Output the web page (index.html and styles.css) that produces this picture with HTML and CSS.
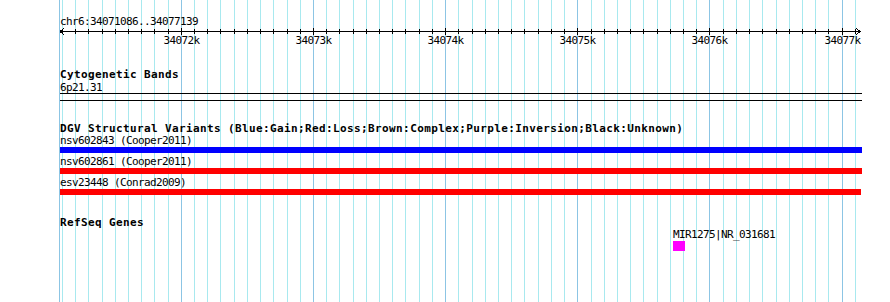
FILE: index.html
```html
<!DOCTYPE html>
<html lang="en">
<head>
    <meta charset="UTF-8">
    <title>chr6:34071086..34077139</title>
    <link rel="stylesheet" href="styles.css">
</head>
<body>
    <div class="browser">
        <svg class="grid" width="890" height="302" viewBox="0 0 890 302">
            <path class="minor" d="M62.5 0V302M75.5 0V302M88.5 0V302M102.5 0V302M115.5 0V302M128.5 0V302M141.5 0V302M154.5 0V302M168.5 0V302
                M194.5 0V302M207.5 0V302M220.5 0V302M234.5 0V302M247.5 0V302M260.5 0V302M273.5 0V302M287.5 0V302M300.5 0V302
                M326.5 0V302M339.5 0V302M353.5 0V302M366.5 0V302M379.5 0V302M392.5 0V302M405.5 0V302M419.5 0V302M432.5 0V302
                M458.5 0V302M472.5 0V302M485.5 0V302M498.5 0V302M511.5 0V302M524.5 0V302M538.5 0V302M551.5 0V302M564.5 0V302
                M591.5 0V302M604.5 0V302M617.5 0V302M630.5 0V302M643.5 0V302M657.5 0V302M670.5 0V302M683.5 0V302M696.5 0V302
                M723.5 0V302M736.5 0V302M749.5 0V302M762.5 0V302M776.5 0V302M789.5 0V302M802.5 0V302M815.5 0V302M828.5 0V302
                M855.5 0V302"/>
            <path class="major" d="M59.5 0V302M181.5 0V302M313.5 0V302M445.5 0V302M577.5 0V302M709.5 0V302M842.5 0V302"/>
        </svg>

        <div class="panel">
            <div class="ruler">
                <div class="segment">chr6:34071086..34077139</div>
                <svg class="scale" width="802" height="7" viewBox="0 0 802 7">
                    <path d="M0 3.5H800M4 0L0 3.5L4 7M796 0L800 3.5L796 7"/>
                    <path d="M2.5 1V6M15.5 1V6M28.5 1V6M42.5 1V6M55.5 1V6M68.5 1V6M81.5 1V6M94.5 1V6M108.5 1V6
                        M134.5 1V6M147.5 1V6M160.5 1V6M174.5 1V6M187.5 1V6M200.5 1V6M213.5 1V6M227.5 1V6M240.5 1V6
                        M266.5 1V6M279.5 1V6M293.5 1V6M306.5 1V6M319.5 1V6M332.5 1V6M345.5 1V6M359.5 1V6M372.5 1V6
                        M398.5 1V6M412.5 1V6M425.5 1V6M438.5 1V6M451.5 1V6M464.5 1V6M478.5 1V6M491.5 1V6M504.5 1V6
                        M531.5 1V6M544.5 1V6M557.5 1V6M570.5 1V6M583.5 1V6M597.5 1V6M610.5 1V6M623.5 1V6M636.5 1V6
                        M663.5 1V6M676.5 1V6M689.5 1V6M702.5 1V6M716.5 1V6M729.5 1V6M742.5 1V6M755.5 1V6M768.5 1V6
                        M795.5 1V6"/>
                    <path d="M121.5 0V7M253.5 0V7M385.5 0V7M517.5 0V7M649.5 0V7M782.5 0V7"/>
                </svg>
                <div class="tick-labels">
                    <span style="left: 121.5px">34072k</span>
                    <span style="left: 253.5px">34073k</span>
                    <span style="left: 385.5px">34074k</span>
                    <span style="left: 517.5px">34075k</span>
                    <span style="left: 649.5px">34076k</span>
                    <span style="left: 782.5px">34077k</span>
                </div>
            </div>

            <section class="track cyto">
                <div class="track-title">Cytogenetic Bands</div>
                <div class="band-label">6p21.31</div>
                <div class="band-box"></div>
            </section>

            <section class="track dgv">
                <div class="track-title">DGV Structural Variants (Blue:Gain;Red:Loss;Brown:Complex;Purple:Inversion;Black:Unknown)</div>
                <div class="variant">
                    <div class="feat-label">nsv602843 (Cooper2011)</div>
                    <div class="bar gain"></div>
                </div>
                <div class="variant">
                    <div class="feat-label">nsv602861 (Cooper2011)</div>
                    <div class="bar loss"></div>
                </div>
                <div class="variant">
                    <div class="feat-label">esv23448 (Conrad2009)</div>
                    <div class="bar loss short"></div>
                </div>
            </section>

            <section class="track refseq">
                <div class="track-title">RefSeq Genes</div>
                <div class="gene">
                    <div class="feat-label">MIR1275|NR_031681</div>
                    <div class="gene-box"></div>
                </div>
            </section>
        </div>
    </div>
</body>
</html>
```

FILE: styles.css
```css
body, html {
    margin: 0;
    padding: 0;
    background-color: white;
}
.browser {
    position: relative;
    width: 890px;
    height: 302px;
    overflow: hidden;
    background-color: white;
    font-family: "DejaVu Sans Mono", "Liberation Mono", monospace;
    font-size: 11px;
    letter-spacing: -0.62px;
    line-height: 13px;
    color: black;
}
.grid {
    position: absolute;
    left: 0;
    top: 0;
}
.grid path {
    fill: none;
    stroke-width: 1;
    shape-rendering: crispEdges;
}
.grid .minor {
    stroke: #a8e9ef;
}
.grid .major {
    stroke: #8cc5e4;
}
.panel {
    position: relative;
    padding: 15px 0 0 60px;
}
.segment {
    height: 13px;
    white-space: nowrap;
}
.scale {
    display: block;
}
.scale path {
    fill: none;
    stroke: black;
    stroke-width: 1;
    shape-rendering: crispEdges;
}
.tick-labels {
    position: relative;
    height: 13px;
    margin-top: -1px;
}
.tick-labels span {
    position: absolute;
    top: 0;
    transform: translateX(-50%);
    white-space: nowrap;
}
.track-title {
    font-weight: bold;
    font-size: 11px;
    letter-spacing: 0.38px;
    height: 12px;
    white-space: nowrap;
}
.cyto {
    margin-top: 21px;
}
.band-label {
    margin-top: 1px;
    height: 12px;
}
.band-box {
    width: 802px;
    height: 6px;
    border-top: 1px solid black;
    border-bottom: 1px solid black;
}
.dgv {
    margin-top: 21px;
}
.variant {
    margin-bottom: 2px;
}
.feat-label {
    height: 13px;
    white-space: nowrap;
}
.bar {
    width: 802px;
    height: 6px;
}
.bar.short {
    width: 801px;
}
.gain {
    background-color: #0000ff;
}
.loss {
    background-color: #ff0000;
}
.refseq {
    margin-top: 21px;
}
.gene {
    padding-left: 613px;
}
.gene-box {
    width: 12px;
    height: 10px;
    background-color: #ff00ff;
}
```
